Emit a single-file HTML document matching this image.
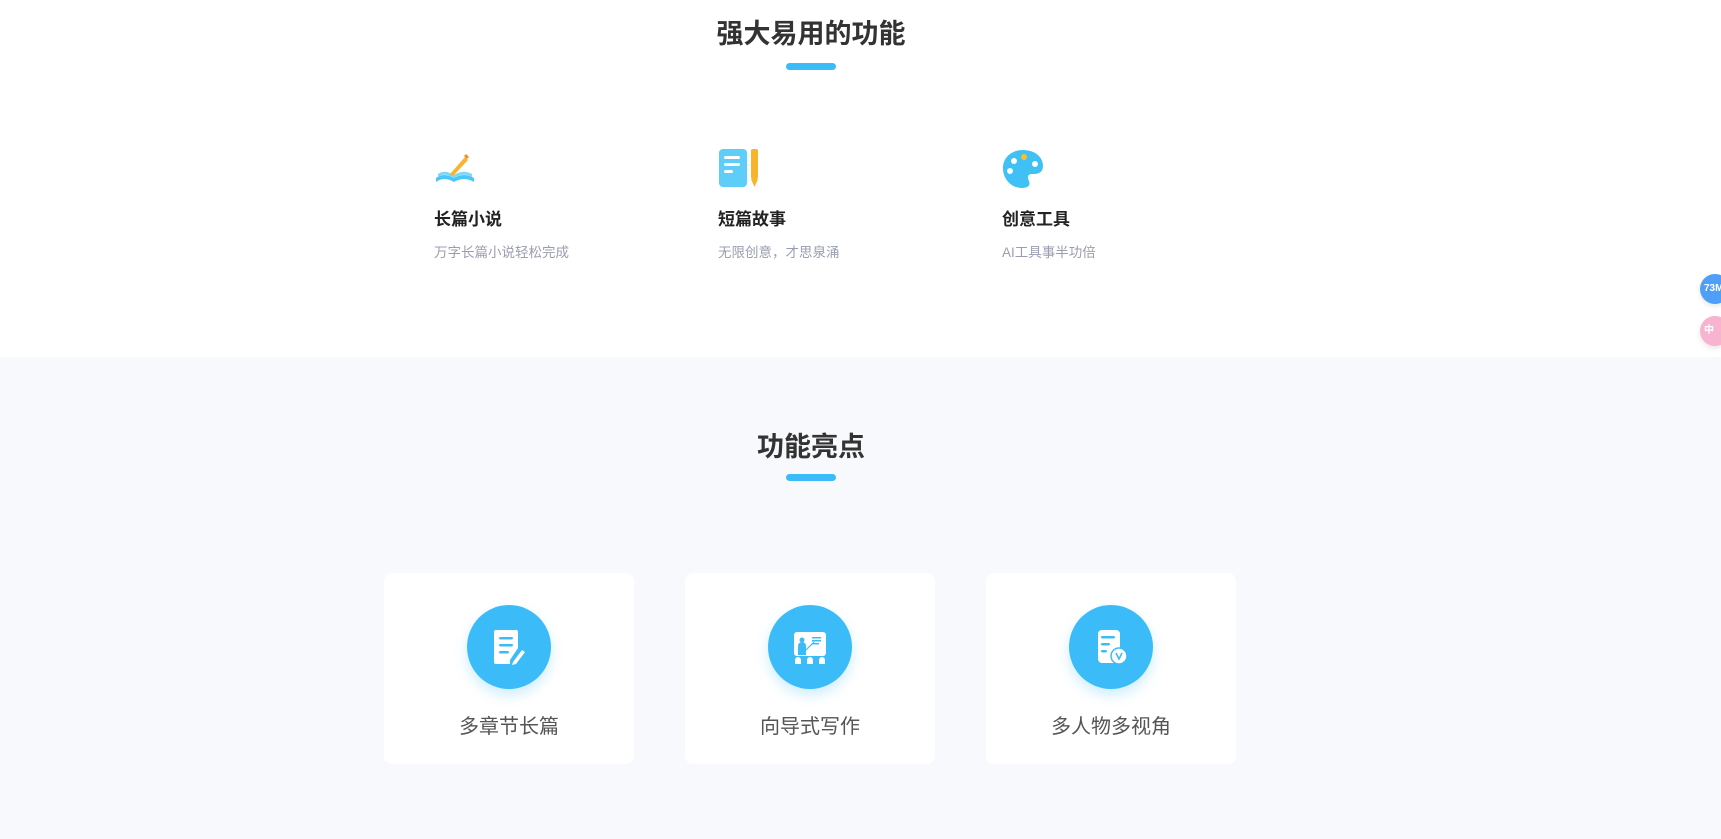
<!DOCTYPE html>
<html><head><meta charset="utf-8"><style>
*{margin:0;padding:0;box-sizing:border-box}
body{width:1721px;height:839px;overflow:hidden;background:#f8f9fc;font-family:"Liberation Sans","Noto Sans CJK SC",sans-serif;position:relative}
.top{position:absolute;left:0;top:0;width:1721px;height:357px;background:#fff}
.h{position:absolute;left:0;width:1622px;text-align:center;font-size:27px;font-weight:700;color:#333}
.bar{position:absolute;left:786px;width:50px;height:7px;border-radius:4px;background:#3bbcf8}
.it{position:absolute;top:148px}
.it .ic{width:42px;height:42px}
.it .t{position:absolute;top:57px;left:0;font-size:17px;font-weight:700;color:#222;white-space:nowrap}
.it .d{position:absolute;top:93px;left:0;font-size:13.5px;color:#9a9db0;white-space:nowrap}
.card{position:absolute;top:573px;width:250px;height:191px;background:#fff;border-radius:8px}
.circ{position:absolute;left:83px;top:32px;width:84px;height:84px;border-radius:50%;background:#3bbcf8;box-shadow:0 6px 12px rgba(59,188,248,.25);display:flex;align-items:center;justify-content:center}
.card .l{position:absolute;top:137px;width:250px;text-align:center;font-size:20px;color:#555}
.side{position:absolute;left:1700px;width:30px;height:30px;border-radius:50%;color:#fff;font-size:10px;font-weight:700;line-height:30px;padding-left:4px;box-shadow:0 2px 6px rgba(0,0,0,.1)}
</style></head><body>
<div class="top"></div>
<div class="h" style="top:12px">强大易用的功能</div>
<div class="bar" style="top:63px"></div>

<div class="it" style="left:434px">
<svg class="ic" viewBox="0 0 42 42"><path d="M2 30 Q10 24 20 30 Q30 24 40 30 L40 34 Q30 28 20 34 Q10 28 2 34Z" fill="#4cc6f5"/><path d="M4 26 Q11 21 20 27 Q29 21 38 26 L38 29 Q29 24 20 30 Q11 24 4 29Z" fill="#7dd8f8"/><path d="M17 25 L31 9 L34 12 L20 27 L16 28Z" fill="#f6b52b"/><path d="M30 8 L32 6 L35 9 L33 11Z" fill="#f08d2b"/></svg>
<div class="t">长篇小说</div><div class="d">万字长篇小说轻松完成</div></div>

<div class="it" style="left:718px">
<svg class="ic" viewBox="0 0 42 42"><rect x="1" y="1" width="28" height="38" rx="4" fill="#5ecdf8"/><rect x="6" y="8" width="16" height="3" rx="1.5" fill="#fff"/><rect x="6" y="15" width="16" height="3" rx="1.5" fill="#fff"/><rect x="6" y="22" width="9" height="3" rx="1.5" fill="#fff"/><rect x="33" y="1" width="7" height="30" rx="2" fill="#f6b52b"/><path d="M33 31 L40 31 L36.5 39Z" fill="#f6b52b"/></svg>
<div class="t">短篇故事</div><div class="d">无限创意，才思泉涌</div></div>

<div class="it" style="left:1002px">
<svg class="ic" viewBox="0 0 42 42"><path d="M21 2 C33 2 41 9 41 18 C41 26 34 26 30 26 C26 26 25 29 27 33 C29 38 25 40 20 40 C9 40 1 31 1 20 C1 9 10 2 21 2Z" fill="#3fc1f6"/><circle cx="22" cy="9" r="3" fill="#f6c02b"/><circle cx="12" cy="13" r="3" fill="#fff"/><circle cx="33" cy="16" r="3" fill="#fff"/><circle cx="8" cy="23" r="3" fill="#fff"/></svg>
<div class="t">创意工具</div><div class="d">AI工具事半功倍</div></div>

<div class="side" style="top:274px;background:#4f9ef8">73M</div>
<div class="side" style="top:316px;background:#f7b3cf">中</div>

<div class="h" style="top:425px">功能亮点</div>
<div class="bar" style="top:474px"></div>

<div class="card" style="left:384px"><div class="circ"><svg width="44" height="44" viewBox="0 0 44 44"><path d="M9 5 h20 a2 2 0 0 1 2 2 v16 l-8 12 v4 h-14 a2 2 0 0 1 -2 -2 v-30 a2 2 0 0 1 2 -2z" fill="#fff"/><rect x="12" y="12" width="14" height="2.5" rx="1.2" fill="#3bbcf8"/><rect x="12" y="19" width="14" height="2.5" rx="1.2" fill="#3bbcf8"/><rect x="12" y="26" width="10" height="2.5" rx="1.2" fill="#3bbcf8"/><path d="M26 37 L35 25 L38 27 L29 39 L25 40Z" fill="#fff"/></svg></div><div class="l">多章节长篇</div></div>

<div class="card" style="left:685px"><div class="circ"><svg width="44" height="44" viewBox="0 0 44 44"><rect x="6" y="7" width="32" height="24" rx="3" fill="#fff"/><circle cx="14" cy="15" r="2.5" fill="#3bbcf8"/><path d="M10 30 v-9 a4 4 0 0 1 8 0 v9z" fill="#3bbcf8"/><path d="M18 25 L26 17" stroke="#3bbcf8" stroke-width="1.2"/><rect x="24" y="12" width="9" height="1.5" fill="#3bbcf8"/><rect x="24" y="15" width="9" height="1.5" fill="#3bbcf8"/><rect x="24" y="18" width="7" height="1.5" fill="#3bbcf8"/><path d="M7 39 v-4 a3 3 0 0 1 6 0 v4z M19 39 v-4 a3 3 0 0 1 6 0 v4z M31 39 v-4 a3 3 0 0 1 6 0 v4z" fill="#fff"/></svg></div><div class="l">向导式写作</div></div>

<div class="card" style="left:986px"><div class="circ"><svg width="44" height="44" viewBox="0 0 44 44"><rect x="9" y="5" width="22" height="33" rx="4" fill="#fff"/><rect x="12" y="11" width="14" height="2.5" rx="1.2" fill="#3bbcf8"/><rect x="12" y="18" width="9" height="2.5" rx="1.2" fill="#3bbcf8"/><rect x="12" y="25" width="6" height="2.5" rx="1.2" fill="#3bbcf8"/><circle cx="30" cy="31" r="8" fill="#fff" stroke="#3bbcf8" stroke-width="1.5"/><path d="M27 28 L30 34 L33 28" stroke="#3bbcf8" stroke-width="1.6" fill="none"/></svg></div><div class="l">多人物多视角</div></div>
</body></html>
